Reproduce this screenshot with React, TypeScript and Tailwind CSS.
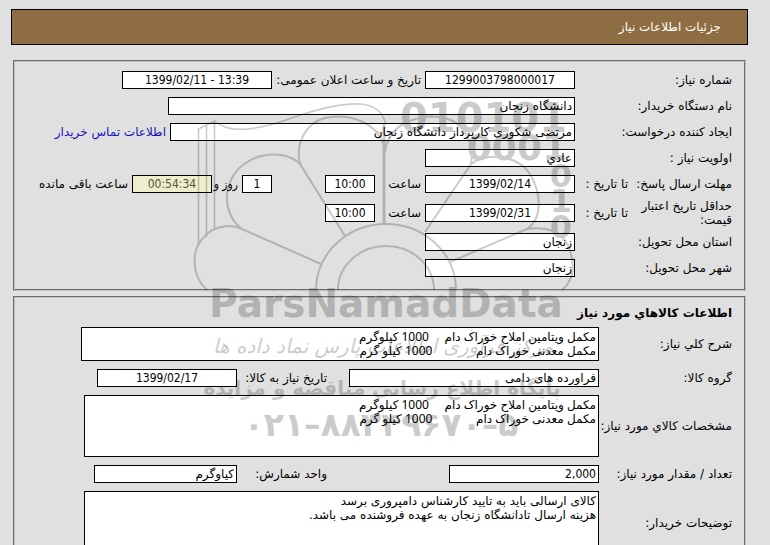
import { useId } from "react";
import clsx from "clsx";

type FieldProps = {
  value: string;
  className?: string;
  id?: string;
  label?: string;
  bg?: string;
};

const fieldClass = "h-[18px] shrink-0 border border-black px-0.5";
const condensed = "font-['DejaVu_Sans_Condensed','DejaVu_Sans',sans-serif]";
const numberClass = clsx("text-center", condensed);

function Field({ value, className, id, label, bg = "bg-white" }: FieldProps) {
  return <input id={id} aria-label={label} readOnly value={value} className={clsx(fieldClass, bg, className)} />;
}

type RowProps = {
  label: string;
  labelClass: string;
  children: (id: string) => React.ReactNode;
};

function Row({ label, labelClass, children }: RowProps) {
  const id = useId();
  return (
    <div className="flex min-h-[22px] items-center">
      <label htmlFor={id} className={clsx("shrink-0", labelClass)}>
        {label}
      </label>
      {children(id)}
    </div>
  );
}

function Area({ id, value, className }: { id: string; value: string; className: string }) {
  return (
    <textarea
      id={id}
      readOnly
      value={value}
      className={clsx("my-0.5 block shrink-0 resize-none overflow-hidden border border-black bg-white px-0.5 pt-0.5", className)}
    />
  );
}

function Watermark() {
  return (
    <svg
      aria-hidden="true"
      viewBox="190 95 390 360"
      className="pointer-events-none absolute inset-x-0 top-[95px] mx-auto h-[360px] w-[390px] opacity-20"
    >
      <g fill="none" stroke="#000" strokeWidth="2">
        <path d="M198.500 246V129l8-4v112M206.500 125l8-4v109M214.500 121c10 8 20 9 33 8 22-2 38-9 53-14 22-7 42-12 60-11 14 1 22 8 25 19" strokeWidth="1.600" />
        <path d="M207 290c-16-14-16-41-3-53 8-10 26-14 38-8l79 35" />
        <path d="M242 229c-15-11-19-32-11-49 12-27 52-33 69-16l45 72" />
        <path d="M300 164c-5-19 5-41 25-46 22-5 56 3 60 34" />
        <path d="M385 152c4-31 38-39 60-34 20 5 30 27 26 46l-46 68" />
        <path d="M471 164c17-13 50-8 60 12 9 16 13 41-4 53l-77 33" />
        <path d="M527 229c18-3 38 2 43 22 5 15 4 29-8 39" />
        <path d="M316 290a70 66 0 0 1 140 0M338 290a48 44 0 0 1 96 0" />
        <path d="M384 123v102" strokeWidth="3" />
      </g>
      <g fontFamily="DejaVu Sans" fontWeight="bold">
        <g textAnchor="end" style={{ direction: "ltr" }}>
          <text x="567" y="132" fontSize="40">010101</text>
          <text x="567" y="160" fontSize="36">0001</text>
          <text x="572" y="187" fontSize="32">0</text>
          <text x="572" y="212" fontSize="32">1</text>
          <text x="572" y="238" fontSize="32">0</text>
        </g>
        <g textAnchor="middle">
          <text x="386" y="317" fontSize="39">ParsNamadData</text>
          <text x="383" y="353" fontSize="20" fontStyle="italic" fontWeight="normal">مرکز فرآوری اطلاعات پارس نماد داده ها</text>
          <text x="382" y="395" fontSize="20">پایگاه اطلاع رسانی مناقصه و مزایده</text>
          <text x="381" y="436" fontSize="33" style={{ direction: "ltr" }}>۰۲۱–۸۸۳۴۹۶۷۰–۵</text>
        </g>
      </g>
    </svg>
  );
}

const goods = "مکمل ویتامین املاح خوراک دام     1000 کیلوگرم\nمکمل معدنی خوراک دام              1000 کیلو گرم";
const goodsFont = "font-['Noto_Sans','DejaVu_Sans',sans-serif]";

const fieldsetClass = "mr-[24px] ml-[13px] border-2 border-[#c0c0c0] pr-[12px] pl-[10px] [border-style:groove]";

export default function App() {
  const first = "w-[157px]";
  const second = "w-[133px] whitespace-nowrap";

  return (
    <main
      dir="rtl"
      className="relative min-h-screen overflow-hidden bg-[#e0e0e0] pt-[9px] font-['DejaVu_Sans',sans-serif] text-[12px] leading-[14px] text-black"
    >
      <h1 className="mr-[22px] ml-[11px] flex h-[36px] items-center border border-black bg-[#8f6d42] pr-[26px] text-white">
        جزئیات اطلاعات نیاز
      </h1>

      <fieldset className={clsx(fieldsetClass, "mt-[15px] flex flex-col gap-1 pt-[7px] pb-[10px]")}>
        <Row label="شماره نیاز:" labelClass={first}>
          {(id) => (
            <>
              <Field id={id} value="1299003798000017" className={clsx("w-[150px]", numberClass)} />
              <label htmlFor={id + "d"} className="w-[153px] pr-1 whitespace-nowrap">تاریخ و ساعت اعلان عمومی:</label>
              <input
                id={id + "d"}
                dir="ltr"
                readOnly
                value="1399/02/11 - 13:39"
                className={clsx(fieldClass, "w-[150px] bg-white", numberClass)}
              />
            </>
          )}
        </Row>
        <Row label="نام دستگاه خریدار:" labelClass={first}>
          {(id) => <Field id={id} value="دانشگاه زنجان" className="w-[407px]" />}
        </Row>
        <Row label="ایجاد کننده درخواست:" labelClass={first}>
          {(id) => (
            <>
              <Field id={id} value="مرتضی شکوری کارپرداز دانشگاه زنجان" className="w-[405px]" />
              <a href="#contact" className="mr-1 text-[#1a12b8]">اطلاعات تماس خریدار</a>
            </>
          )}
        </Row>
        <Row label="اولویت نیاز :" labelClass={first}>
          {(id) => <Field id={id} value="عادي" className="w-[150px]" />}
        </Row>
        <Row label="مهلت ارسال پاسخ:" labelClass="w-[104px] whitespace-nowrap">
          {(id) => (
            <>
              <span className="w-[53px]">تا تاریخ :</span>
              <Field id={id} value="1399/02/14" className={clsx("w-[150px]", numberClass)} />
              <label htmlFor={id + "t"} className="w-[50px] pr-1">ساعت</label>
              <Field id={id + "t"} value="10:00" className={clsx("w-[50px]", numberClass)} />
              <Field label="روز" value="1" className={clsx("mr-[53px] w-[30px]", numberClass)} />
              <span className={clsx("w-[30px] pr-1 whitespace-nowrap", condensed)}>روز و</span>
              <Field
                label="ساعت باقی مانده"
                value="00:54:34"
                bg="bg-[#eeeecc]"
                className={clsx("w-[80px] text-[#545442]", numberClass)}
              />
              <span className="mr-1">ساعت باقی مانده</span>
            </>
          )}
        </Row>
        <Row label="حداقل تاریخ اعتبار قیمت:" labelClass="w-[104px] pl-[10px]">
          {(id) => (
            <>
              <span className="w-[53px]">تا تاریخ :</span>
              <Field id={id} value="1399/02/31" className={clsx("w-[150px]", numberClass)} />
              <label htmlFor={id + "t"} className="w-[50px] pr-1">ساعت</label>
              <Field id={id + "t"} value="10:00" className={clsx("w-[50px]", numberClass)} />
            </>
          )}
        </Row>
        <Row label="استان محل تحویل:" labelClass={first}>
          {(id) => <Field id={id} value="زنجان" className="w-[150px]" />}
        </Row>
        <Row label="شهر محل تحویل:" labelClass={first}>
          {(id) => <Field id={id} value="زنجان" className="w-[150px]" />}
        </Row>
      </fieldset>

      <fieldset className={clsx(fieldsetClass, "mt-[5px] flex flex-col gap-1 pt-[8px] pb-[10px]")}>
        <h2 className="text-[12px] leading-[15px] font-bold">اطلاعات کالاهاي مورد نیاز</h2>
        <Row label="شرح کلي نیاز:" labelClass={second}>
          {(id) => <Area id={id} value={goods} className={clsx("h-[34px] w-[518px]", goodsFont)} />}
        </Row>
        <Row label="گروه کالا:" labelClass={second}>
          {(id) => (
            <>
              <Field id={id} value="فراورده های دامی" className="w-[250px]" />
              <label htmlFor={id + "d"} className="w-[112px] pr-[22px] whitespace-nowrap">تاریخ نیاز به کالا:</label>
              <Field id={id + "d"} value="1399/02/17" className={clsx("w-[140px]", numberClass)} />
            </>
          )}
        </Row>
        <Row label="مشخصات کالاي مورد نیاز:" labelClass={second}>
          {(id) => <Area id={id} value={goods} className={clsx("h-[62px] w-[515px]", goodsFont)} />}
        </Row>
        <Row label="تعداد / مقدار مورد نیاز:" labelClass={second}>
          {(id) => (
            <>
              <Field id={id} value="2,000" className={clsx("w-[150px]", condensed)} />
              <label htmlFor={id + "u"} className="w-[212px] pr-[122px] whitespace-nowrap">واحد شمارش:</label>
              <Field id={id + "u"} value="کیاوگرم" className="w-[143px]" />
            </>
          )}
        </Row>
        <Row label="توضیحات خریدار:" labelClass={second}>
          {(id) => (
            <Area
              id={id}
              value={"کالای ارسالی باید به تایید کارشناس دامپروری برسد\nهزینه ارسال تادانشگاه زنجان به عهده فروشنده می باشد."}
              className="h-[64px] w-[515px]"
            />
          )}
        </Row>
      </fieldset>

      <Watermark />
    </main>
  );
}
